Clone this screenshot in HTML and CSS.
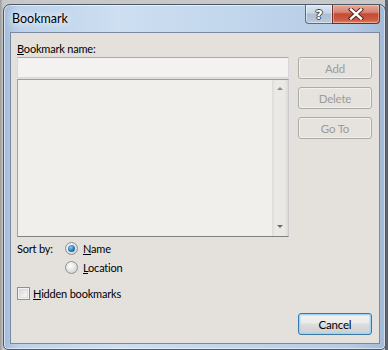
FILE: index.html
```html
<!DOCTYPE html>
<html>
<head>
<meta charset="utf-8">
<link rel="stylesheet" href="styles.css">
</head>
<body>
<div class="window">
  <div class="titlebar">
    <span class="title">Bookmark</span>
    <div class="caption-buttons">
      <div class="cap help"><span class="qmark">?</span></div>
      <div class="cap close">
        <svg width="16" height="12" viewBox="0 0 16 12">
          <path d="M3 1.5 L13 10.5 M13 1.5 L3 10.5" stroke="#4b1c14" stroke-width="4.2" stroke-linecap="square" fill="none"/>
          <path d="M3 1.5 L13 10.5 M13 1.5 L3 10.5" stroke="#ffffff" stroke-width="2.4" stroke-linecap="square" fill="none"/>
        </svg>
      </div>
    </div>
  </div>
  <div class="client">
    <div class="label"><u>B</u>ookmark name:</div>
    <div class="main">
      <div class="left">
        <div class="input"></div>
        <div class="list">
          <div class="list-body"></div>
          <div class="scrollbar">
            <span class="arrow up"></span>
            <span class="arrow down"></span>
          </div>
        </div>
      </div>
      <div class="buttons">
        <div class="btn disabled">Add</div>
        <div class="btn disabled">Delete</div>
        <div class="btn disabled">Go To</div>
      </div>
    </div>
    <div class="sort">
      <div class="sort-label">Sort by:</div>
      <div class="radios">
        <div class="option"><span class="radio checked"></span><span><u>N</u>ame</span></div>
        <div class="option"><span class="radio"></span><span><u>L</u>ocation</span></div>
      </div>
    </div>
    <div class="check-row"><span class="checkbox"></span><span><u>H</u>idden bookmarks</span></div>
    <div class="footer"><div class="btn default">Cancel</div></div>
  </div>
</div>
</body>
</html>
```
FILE: styles.css
```css
html, body {
  margin: 0;
  padding: 0;
}
body {
  width: 388px;
  height: 350px;
  overflow: hidden;
  background: linear-gradient(to right, #9a9a9a 0, #c8c8c8 3px, #c8c8c8 385px, #5e6470 385px);
  font-family: Lato, "Open Sans", sans-serif;
  font-size: 11px;
  letter-spacing: -0.2px;
  color: #000;
}
u { text-decoration: underline; text-underline-offset: 1px; }

.window {
  box-sizing: border-box;
  margin: 4px 0 0 3px;
  width: 383px;
  height: 346px;
  border: 1px solid #4b5868;
  border-radius: 7px 7px 5px 5px;
  padding: 0 5px 5px 6px;
  display: flex;
  flex-direction: column;
  background: linear-gradient(to right, #a3bcda 0, #bdd2ea 4%, #cddff1 30%, #c2d6ec 60%, #b6cce6 90%, #a3bbd8 100%);
  box-shadow: inset 0 0 0 1px rgba(255,255,255,0.55);
}

.titlebar {
  height: 27px;
  display: flex;
  align-items: flex-start;
  justify-content: space-between;
  flex: none;
}
.title {
  margin: 6px 0 0 2px;
  line-height: 15px;
  font-size: 12.5px;
  letter-spacing: 0;
  text-shadow: 0 0 6px rgba(255,255,255,0.95), 0 0 10px rgba(255,255,255,0.8);
}
.caption-buttons {
  display: flex;
  margin-top: 0;
}
.cap {
  box-sizing: border-box;
  height: 19px;
  display: flex;
  align-items: center;
  justify-content: center;
  border: 1px solid #5c6c80;
  border-top: none;
}
.help {
  width: 27px;
  border-radius: 0 0 0 4px;
  border-right: none;
  background: linear-gradient(#dce6f2 0, #c7d5e6 45%, #aebfd4 50%, #b8c9dd 100%);
  box-shadow: inset 0 0 0 1px rgba(255,255,255,0.45);
}
.qmark {
  font-family: "DejaVu Sans", sans-serif;
  font-weight: bold;
  font-size: 13px;
  line-height: 13px;
  letter-spacing: 0;
  color: #fff;
  text-shadow: -1px 0 #3c4756, 1px 0 #3c4756, 0 -1px #3c4756, 0 1px #3c4756;
}
.close {
  width: 48px;
  border-radius: 0 0 4px 0;
  border-color: #6b3028;
  background: linear-gradient(#e8a895 0, #d88370 40%, #c24b33 50%, #cf5d44 85%, #e08a6c 100%);
  box-shadow: inset 0 0 0 1px rgba(255,220,200,0.45);
}

.client {
  flex: 1;
  box-sizing: border-box;
  border: 1px solid #7a8aa0;
  background: #e4e1dd;
  padding: 7px 7px 8px 6px;
  display: flex;
  flex-direction: column;
}
.label {
  line-height: 15px;
  margin-bottom: 2px;
  padding-top: 1px;
  height: 14px;
}
.main {
  display: flex;
  gap: 9px;
}
.left {
  width: 272px;
  display: flex;
  flex-direction: column;
  gap: 1px;
}
.input {
  box-sizing: border-box;
  height: 21px;
  background: #f3f2f0;
  border: 1px solid #d6d7dc;
  border-top-color: #a9abb0;
}
.list {
  box-sizing: border-box;
  height: 158px;
  border: 1px solid #8b8d91;
  border-color: #9a9ca0 #c9cacc #7f8185 #a0a2a6;
  background: #f1efec;
  display: flex;
}
.list-body { flex: 1; }
.scrollbar {
  width: 16px;
  display: flex;
  flex-direction: column;
  justify-content: space-between;
  align-items: center;
  background: linear-gradient(to right, #dedbd7 0, #eceae7 20%, #eae8e5 80%, #dcd9d5 100%);
  padding: 7px 0 8px;
  box-sizing: border-box;
}
.arrow {
  width: 0;
  height: 0;
  border-left: 3px solid transparent;
  border-right: 3px solid transparent;
}
.arrow.up { border-bottom: 3px solid #8f8e8c; }
.arrow.down { border-top: 3px solid #6a6a6a; }

.buttons {
  display: flex;
  flex-direction: column;
  gap: 8px;
}
.btn {
  box-sizing: border-box;
  width: 74px;
  height: 22px;
  border-radius: 3px;
  display: flex;
  align-items: center;
  justify-content: center;
  line-height: 15px;
  font-size: 11.5px;
}
.btn.disabled {
  border: 1px solid #adaba7;
  background: #e6e3df;
  color: #9d9b98;
  box-shadow: inset 0 0 0 1px #f2f0ed;
}
.btn.default {
  border: 1px solid #3a78a8;
  background: linear-gradient(#f3f3f3 0, #ebebeb 45%, #dddddd 50%, #cfcfcf 100%);
  box-shadow: inset 0 0 0 1px #9fd5f2, inset 0 0 0 2px rgba(160,215,240,0.45);
  color: #000;
}

.sort {
  display: flex;
  margin-top: 2px;
}
.sort-label {
  width: 48px;
  line-height: 19px;
}
.option {
  height: 19px;
  display: flex;
  align-items: center;
  gap: 5px;
  line-height: 15px;
}
.radio {
  box-sizing: border-box;
  width: 13px;
  height: 13px;
  border-radius: 50%;
  border: 1px solid #8e8f8f;
  background: radial-gradient(circle at 40% 35%, #ffffff 0, #e6e6e6 45%, #c9c9c9 100%);
  display: flex;
  align-items: center;
  justify-content: center;
}
.radio.checked::after {
  content: "";
  width: 7px;
  height: 7px;
  border-radius: 50%;
  background: radial-gradient(circle at 40% 35%, #8fd0f2 0, #2d86c0 45%, #10456f 100%);
}
.check-row {
  margin-top: 7px;
  height: 19px;
  display: flex;
  align-items: center;
  gap: 3px;
  line-height: 15px;
}
.checkbox {
  box-sizing: border-box;
  width: 13px;
  height: 13px;
  border: 1px solid #8e8f8f;
  background: linear-gradient(135deg, #cfcfcf 0, #f0f0f0 60%, #fafafa 100%);
  box-shadow: inset 0 0 0 1px #f4f4f4, inset 0 0 0 2px #dcdcdc;
}
.footer {
  margin-top: auto;
  display: flex;
  justify-content: flex-end;
}
```
